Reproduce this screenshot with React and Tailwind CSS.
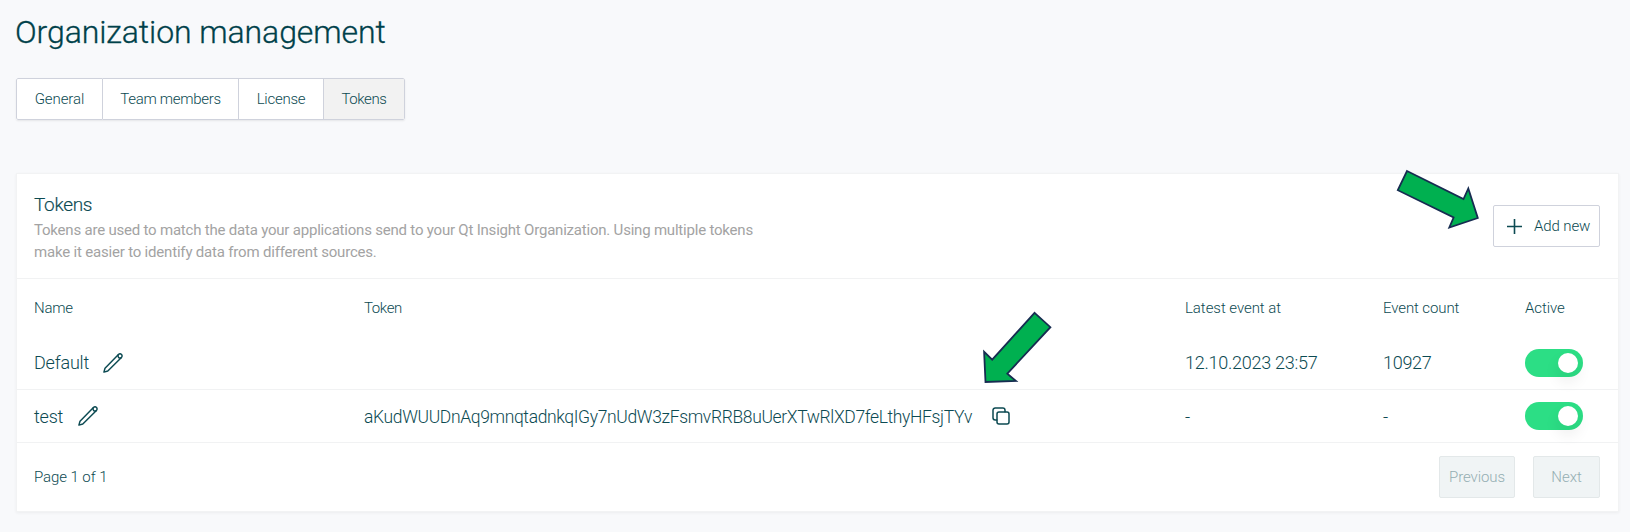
import React from "react";

const columns = "grid grid-cols-[330px_821px_198px_142px_1fr] items-center pl-[17px]";

const tabs = [
  { label: "General", className: "w-[87px] tracking-[-0.08px]" },
  { label: "Team members", className: "w-[136px] tracking-[-0.3px]" },
  { label: "License", className: "w-[85px] tracking-[-0.24px]" },
  { label: "Tokens", className: "w-[81px] bg-[#f2f2f2] tracking-[-0.4px]" },
];

const rows = [
  { name: "Default", token: "", latest: "12.10.2023 23:57", count: "10927", text: "pb-[2px]", gap: "gap-[14px]" },
  {
    name: "test",
    token: "aKudWUUDnAq9mnqtadnkqIGy7nUdW3zFsmvRRB8uUerXTwRlXD7feLthyHFsjTYv",
    latest: "-",
    count: "-",
    text: "",
    gap: "gap-[15px]",
  },
];

function PencilIcon() {
  return (
    <svg width="20" height="20" viewBox="0 0 20 20" fill="none" stroke="currentColor" strokeWidth="1.45" strokeLinejoin="round" strokeLinecap="round">
      <path d="M.9 19.1 2 15.2 15.2 1.8C16.2.8 17.6.6 18.5 1.5 19.4 2.4 19.2 3.8 18.2 4.8L4.8 18Z" />
      <path d="M15.2 1.8C14.4 3.9 16 5.6 18.2 4.8" />
    </svg>
  );
}

function CopyIcon() {
  return (
    <svg width="18" height="18" viewBox="0 0 18 18" fill="none" stroke="currentColor" strokeWidth="1.5" strokeLinecap="round" strokeLinejoin="round">
      <rect x="5" y="5" width="12" height="12" rx="2" />
      <path d="M4.8 13H3.2A2.2 2.2 0 0 1 1 10.8V3.2A2.2 2.2 0 0 1 3.2 1h7.6A2.2 2.2 0 0 1 13 3.2v1.6" />
    </svg>
  );
}

function Toggle() {
  return (
    <button className="flex h-7 w-[58px] items-center justify-end rounded-full bg-[#2cde85] pr-[5px]">
      <span className="size-5 rounded-full bg-white shadow-[0_8px_14px_2px_rgba(0,0,0,0.06)]" />
    </button>
  );
}

export default function App() {
  return (
    <div className="relative h-[532px] w-[1630px] overflow-hidden bg-[#f8f9fb] pl-4 pt-4 font-[Roboto,sans-serif] text-[15px] font-light text-[#0c4a52]">
      <h1 className="-ml-px text-[32px] leading-8 tracking-[-0.09px] text-[#00414a] [-webkit-text-stroke:0.3px_#00414a]">Organization management</h1>

      <div className="mt-[30px] flex h-[42px] w-[389px] overflow-hidden rounded-[2px] bg-white shadow-[0_1px_2px_rgba(0,0,0,0.08)]">
        {tabs.map((tab) => (
          <button
            key={tab.label}
            className={`flex items-center justify-center border-y border-r border-[#cfd2dc] first:rounded-l-[2px] first:border-l last:rounded-r-[2px] ${tab.className}`}
          >
            {tab.label}
          </button>
        ))}
      </div>

      <section className="mt-[53px] w-[1603px] border border-[#f2f3f4] bg-white shadow-[0_1px_3px_rgba(0,0,0,0.05)]">
        <header className="flex h-[105px] items-center justify-between border-b border-[#f1f2f3] pl-[17px] pr-[18px]">
          <div className="pt-[2px]">
            <h2 className="pb-px text-[19px] leading-[27px] tracking-[-0.35px] [-webkit-text-stroke:0.15px_#0c4a52]">Tokens</h2>
            <p className="text-[15px] leading-[22px] font-normal text-[#a3a3a3]">
              <span className="block tracking-[-0.207px]">
                Tokens are used to match the data your applications send to your Qt Insight Organization. Using multiple tokens
              </span>
              <span className="block tracking-[-0.19px]">make it easier to identify data from different sources.</span>
            </p>
          </div>
          <button className="flex h-[42px] w-[107px] items-center rounded-[2px] border border-[#cfd2dc] bg-white pl-[13px]">
            <svg width="15" height="15" viewBox="0 0 15 15" stroke="currentColor" strokeWidth="1.6">
              <path d="M7.5 0v15M0 7.5h15" />
            </svg>
            <span className="ml-[12px] tracking-[-0.1px]">Add new</span>
          </button>
        </header>

        <div className={`${columns} h-[58px]`}>
          <span className="tracking-[-0.25px]">Name</span>
          <span className="tracking-[-0.4px]">Token</span>
          <span className="tracking-[-0.05px]">Latest event at</span>
          <span className="tracking-[-0.1px]">Event count</span>
          <span className="tracking-[-0.1px]">Active</span>
        </div>

        {rows.map((row) => (
          <div key={row.name} className={`${columns} h-[53px] border-b border-[#f1f2f3] text-[18px]`}>
            <div className={`flex items-center ${row.gap}`}>
              <span className={`tracking-[-0.2px] ${row.text}`}>{row.name}</span>
              <PencilIcon />
            </div>
            <div className="flex items-center gap-[20px]">
              {row.token && (
                <>
                  <span className="pt-[2px] text-[17.5px] tracking-[-0.355px]">{row.token}</span>
                  <CopyIcon />
                </>
              )}
            </div>
            <span className={`tracking-[-0.26px] ${row.text}`}>{row.latest}</span>
            <span className={`tracking-[-0.28px] ${row.text}`}>{row.count}</span>
            <Toggle />
          </div>
        ))}

        <footer className="flex h-[68px] items-center justify-between pl-[17px] pr-[18px]">
          <span className="tracking-[-0.08px]">Page 1 of 1</span>
          <div className="flex gap-[18px] text-[#94aeb2]">
            <button className="h-[42px] w-[76px] rounded-[2px] border border-[#e3e8e9] bg-[#f0f4f5] tracking-[-0.1px]">Previous</button>
            <button className="h-[42px] w-[67px] rounded-[2px] border border-[#e3e8e9] bg-[#f0f4f5]">Next</button>
          </div>
        </footer>
      </section>

      {/* Callout arrows pointing at the add and copy buttons */}
      <svg className="absolute left-[1390px] top-[162px]" width="100" height="74" viewBox="1390 162 100 74" fill="#00b050" stroke="#172c51" strokeWidth="1.8">
        <path d="M1407 171 1463.5 199 1468.3 188.5 1477.8 218 1449.3 227.6 1453.6 217.5 1397.8 190.2Z" />
      </svg>
      <svg className="absolute left-[975px] top-[305px]" width="85" height="85" viewBox="975 305 85 85" fill="#00b050" stroke="#172c51" strokeWidth="1.8">
        <path d="M1034.6 312.8 1050.4 327.2 1007.3 373.6 1016 381 985.5 382 984.1 351.8 992.2 359.6Z" />
      </svg>
    </div>
  );
}
